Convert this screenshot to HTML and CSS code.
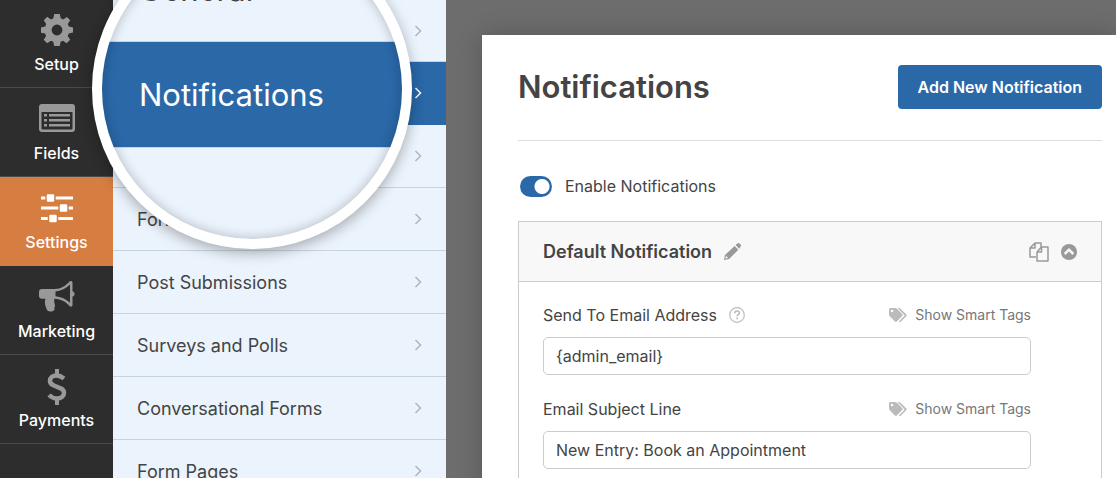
FILE: index.html
```html
<!DOCTYPE html>
<html lang="en">
<head>
    <meta charset="UTF-8">
    <meta name="viewport" content="width=device-width, initial-scale=1.0">
    <title>Form Builder - Notifications</title>
    <link rel="stylesheet" href="styles.css">
</head>
<body>
    <div class="builder">
        <!-- Main toolbar -->
        <nav class="toolbar">
            <a href="#setup" class="tool">
                <svg width="32" height="32" viewBox="0 0 32 32" fill="currentColor" fill-rule="evenodd">
                    <path d="M13.2 0h5.6l.9 4.3 2.5 1.1L25.9 3l3.3 3.3-2.5 3.7 1.1 2.6 4.2.8v5.2l-4.2.9-1.1 2.5 2.500 3.700-3.600 3.600-3.600-2.500-2.400 1-.8 4.200h-5.600l-.9-4.200-2.400-1-3.700 2.500-3.500-3.500 2.400-3.800-1-2.500L0 18.700v-5.200l4.200-.9 1-2.600-2.400-3.700L6.300 2.800l3.600 2.600 2.500-1.100zM16 10.600a5.400 5.400 0 1 0 0 10.800 5.400 5.400 0 0 0 0-10.800z"/>
                </svg>
                <span>Setup</span>
            </a>
            <a href="#fields" class="tool">
                <svg width="36" height="32" viewBox="0 0 36 32" fill="currentColor" fill-rule="evenodd">
                    <path d="M3 2h30a3 3 0 0 1 3 3v22a3 3 0 0 1-3 3H3a3 3 0 0 1-3-3V5a3 3 0 0 1 3-3zM2.500 10v16.500a1 1 0 0 0 1 1h29a1 1 0 0 0 1-1V10z"/>
                    <path d="M5 12h3v2.500H5zM10 12h21v2.500H10zM5 17h3v2.500H5zM10 17h21v2.500H10zM5 22h3v2.500H5zM10 22h21v2.500H10z"/>
                </svg>
                <span>Fields</span>
            </a>
            <a href="#settings" class="tool active">
                <svg width="32" height="32" viewBox="0 0 32 32" fill="currentColor">
                    <path d="M0 5.500h32v3H0zM0 15.500h32v3H0zM0 26h32v3H0z"/>
                    <g stroke="#d67d42" stroke-width="1.500">
                        <rect x="5" y="2.500" width="9" height="9" rx="2"/>
                        <rect x="18" y="12.500" width="9" height="9" rx="2"/>
                        <rect x="7.500" y="23" width="9" height="9" rx="2"/>
                    </g>
                </svg>
                <span>Settings</span>
            </a>
            <a href="#marketing" class="tool">
                <svg width="36" height="32" viewBox="0 0 36 32" fill="currentColor" fill-rule="evenodd">
                    <path d="M3 9h12.500C22 9 27 5.500 30.500 1.500 31.500.5 33.500 1 33.500 2.500v8.700c2.700.6 2.700 4.800 0 5.400V25c0 1.600-1.800 2.200-3 1-3.500-4-8-7-15-7.300-1 3.300.5 5 .5 7 0 1.500-1.200 2-.5 3.300.4.700-.5 1.500-1.500 2-2 1-5 .5-6-1-1.500-3.500-3-7-1.500-11.200H3a3 3 0 0 1-3-3V12a3 3 0 0 1 3-3zM31 4.500c-4 4-9 6.500-14.500 7v4.700c5.500.5 10.500 2.800 14.500 6.600z"/>
                </svg>
                <span>Marketing</span>
            </a>
            <a href="#payments" class="tool">
                <svg width="20" height="36" viewBox="0 0 20 36" fill="none" stroke="currentColor">
                    <path d="M10 0v6M10 30v6" stroke-width="4"/>
                    <path d="M17 9.500C14.500 7.500 12 6.500 9.500 6.500 5.500 6.500 3 8.700 3 11.800c0 7.400 14 4.600 14 12 0 3.700-3 5.700-7 5.700-3.200 0-6-1.500-8-3.500" stroke-width="4.500"/>
                </svg>
                <span>Payments</span>
            </a>
        </nav>

        <!-- Settings sections -->
        <nav class="sections">
            <a href="#general">General<svg class="chevron" viewBox="0 0 8 12"><path d="M1.500 1l5 5-5 5"/></svg></a>
            <a href="#notifications" class="active">Notifications<svg class="chevron" viewBox="0 0 8 12"><path d="M1.500 1l5 5-5 5"/></svg></a>
            <a href="#confirmations">Confirmations<svg class="chevron" viewBox="0 0 8 12"><path d="M1.500 1l5 5-5 5"/></svg></a>
            <a href="#form-locker">Form Locker<svg class="chevron" viewBox="0 0 8 12"><path d="M1.500 1l5 5-5 5"/></svg></a>
            <a href="#post-submissions">Post Submissions<svg class="chevron" viewBox="0 0 8 12"><path d="M1.500 1l5 5-5 5"/></svg></a>
            <a href="#surveys">Surveys and Polls<svg class="chevron" viewBox="0 0 8 12"><path d="M1.500 1l5 5-5 5"/></svg></a>
            <a href="#conversational">Conversational Forms<svg class="chevron" viewBox="0 0 8 12"><path d="M1.500 1l5 5-5 5"/></svg></a>
            <a href="#form-pages">Form Pages<svg class="chevron" viewBox="0 0 8 12"><path d="M1.500 1l5 5-5 5"/></svg></a>
        </nav>

        <!-- Notification settings -->
        <div class="stage">
            <main class="panel">
                <header class="panel-header">
                    <h1>Notifications</h1>
                    <button type="button" class="add-button">Add New Notification</button>
                </header>

                <label class="toggle">
                    <input type="checkbox" role="switch" checked>
                    <span>Enable Notifications</span>
                </label>

                <section class="card">
                    <div class="card-header">
                        <h2>Default Notification</h2>
                        <button type="button" class="icon-button" aria-label="Rename">
                            <svg width="17" height="17" viewBox="0 0 18 18" fill="currentColor" fill-rule="evenodd">
                                <path d="M11.300 3.200l3.900 3.900L5.400 17 0 18l1-5.400zM1.900 13.900l-.5 2.500 2.500-.5v-1H2.900v-1z"/>
                                <path d="M12.300 2.200L14 .6c.8-.8 1.800-.8 2.500 0l1 1c.7.700.7 1.700 0 2.500l-1.400 1.900z"/>
                            </svg>
                        </button>
                        <div class="card-actions">
                            <button type="button" class="icon-button" aria-label="Duplicate">
                                <svg width="20" height="20" viewBox="0 0 20 20" fill="none" stroke="currentColor" stroke-width="1.500" stroke-linejoin="round">
                                    <path d="M7 15H1V6l5-5h6v4M6 1v5H1"/>
                                    <path d="M12.500 5H19v14H8V10zM12.500 5v5H8"/>
                                </svg>
                            </button>
                            <button type="button" class="icon-button" aria-label="Collapse">
                                <svg width="16" height="16" viewBox="0 0 16 16">
                                    <circle cx="8" cy="8" r="8" fill="currentColor"/>
                                    <path d="M3.700 10L8 5.700l4.300 4.300" fill="none" stroke="#f8f8f8" stroke-width="2.500"/>
                                </svg>
                            </button>
                        </div>
                    </div>

                    <div class="card-body">
                        <div class="field">
                            <div class="field-head">
                                <label for="sendTo">Send To Email Address</label>
                                <button type="button" class="icon-button help" aria-label="Help">
                                    <svg width="16" height="16" viewBox="0 0 16 16" fill="none" stroke="currentColor">
                                        <circle cx="8" cy="8" r="7.300" stroke-width="1.200"/>
                                        <path d="M5.700 6.300C5.700 3.200 10.400 3.300 10.400 6c0 1.600-2.300 1.700-2.300 3.300M8.100 10.500v1.700" stroke-width="1.600"/>
                                    </svg>
                                </button>
                                <a href="#tags" class="smart-tags">
                                    <svg width="18" height="15" viewBox="0 0 18 15" fill="currentColor" fill-rule="evenodd">
                                        <path d="M0 1.500C0 .7.700 0 1.500 0H6c.8 0 1.500.3 2 .8L13.200 6c.6.600.6 1.400 0 2l-5.400 5.400c-.6.600-1.400.6-2 0L.8 8.300C.3 7.800 0 7 0 6.200zM3 1.700a1.300 1.300 0 1 0 0 2.600 1.300 1.300 0 0 0 0-2.600z"/>
                                        <path d="M8.500 0h1c.8 0 1.500.3 2 .8L17.200 6.300c.6.600.6 1.400 0 2L12 13.600c-.7.700-1.500.6-2.200-.1L15.300 8c.3-.3.300-.7 0-1z"/>
                                    </svg>
                                    Show Smart Tags
                                </a>
                            </div>
                            <input type="text" id="sendTo" value="{admin_email}">
                        </div>

                        <div class="field">
                            <div class="field-head">
                                <label for="subject">Email Subject Line</label>
                                <a href="#tags" class="smart-tags">
                                    <svg width="18" height="15" viewBox="0 0 18 15" fill="currentColor" fill-rule="evenodd">
                                        <path d="M0 1.500C0 .7.700 0 1.500 0H6c.8 0 1.500.3 2 .8L13.200 6c.6.600.6 1.400 0 2l-5.400 5.400c-.6.600-1.400.6-2 0L.8 8.300C.3 7.800 0 7 0 6.200zM3 1.700a1.300 1.300 0 1 0 0 2.600 1.300 1.300 0 0 0 0-2.600z"/>
                                        <path d="M8.500 0h1c.8 0 1.500.3 2 .8L17.200 6.300c.6.600.6 1.400 0 2L12 13.600c-.7.700-1.500.6-2.200-.1L15.300 8c.3-.3.300-.7 0-1z"/>
                                    </svg>
                                    Show Smart Tags
                                </a>
                            </div>
                            <input type="text" id="subject" value="New Entry: Book an Appointment">
                        </div>
                    </div>
                </section>
            </main>
        </div>

        <!-- Magnifier over the active section -->
        <div class="lens" aria-hidden="true">
            <div class="lens-row lens-top">General</div>
            <div class="lens-row lens-active">Notifications</div>
            <div class="lens-row"></div>
        </div>
    </div>
</body>
</html>
```
FILE: styles.css
```css
* {
    box-sizing: border-box;
}
body {
    margin: 0;
    font-family: Inter, "Liberation Sans", sans-serif;
    color: #444;
    overflow: hidden;
}
a {
    color: inherit;
    text-decoration: none;
}
svg {
    display: block;
    flex: none;
}
.builder {
    position: relative;
    display: flex;
    height: 100vh;
    overflow: hidden;
}

/* Main toolbar */
.toolbar {
    flex: none;
    width: 113px;
    background-color: #2d2d2d;
}
.tool {
    display: flex;
    flex-direction: column;
    align-items: center;
    justify-content: space-between;
    height: 89px;
    padding: 14px 0 13px;
    border-bottom: 1px solid #4a4a4a;
    color: #999;
}
.tool:first-child {
    height: 88px;
}
.tool svg {
    height: 32px;
}
.tool:last-child svg {
    height: 36px;
}
.tool span {
    color: #fff;
    font-size: 16px;
    font-weight: 500;
    line-height: 20px;
}
.tool.active {
    background-color: #d67d42;
    border-bottom-color: #d67d42;
    color: #fff;
}

/* Settings sections */
.sections {
    flex: none;
    width: 333px;
    background-color: #ebf3fc;
}
.sections a {
    display: flex;
    align-items: center;
    justify-content: space-between;
    height: 63px;
    padding: 0 24px;
    border-bottom: 1px solid #c9d3de;
    font-size: 18px;
}
.sections a:first-child {
    height: 62px;
}
.sections .active {
    background-color: #2a68a8;
    border-bottom-color: #2a68a8;
    color: #fff;
}
.chevron {
    width: 8px;
    height: 12px;
    fill: none;
    stroke: #b0b5ba;
    stroke-width: 1.5px;
}
.active .chevron {
    stroke: #fff;
}

/* Notification settings */
.stage {
    flex: 1;
    min-width: 0;
    padding: 35px 0 0 36px;
    background-color: #6d6d6d;
}
.panel {
    min-height: 100%;
    padding: 0 14px 0 36px;
    background-color: #fff;
    box-shadow: 0 0 24px rgba(0, 0, 0, 0.2);
}
.panel-header {
    display: flex;
    align-items: center;
    justify-content: space-between;
    height: 106px;
    padding-bottom: 2px;
    border-bottom: 1px solid #ddd;
}
h1 {
    margin: 0;
    font-size: 31px;
    font-weight: 600;
}
.add-button {
    height: 44px;
    padding: 0 20px;
    border: none;
    border-radius: 4px;
    background-color: #2a68a8;
    color: #fff;
    font: 600 16px Inter, sans-serif;
    cursor: pointer;
}
.toggle {
    display: flex;
    align-items: center;
    gap: 13px;
    padding: 35px 2px 24px;
    font-size: 16px;
    line-height: 21px;
}
.toggle input {
    appearance: none;
    width: 32px;
    height: 21px;
    margin: 0;
    border-radius: 11px;
    background: radial-gradient(circle at 22px 50%, #fff 7px, #2a68a8 8px);
}
.card {
    border: 1px solid #ccc;
}
.card-header {
    display: flex;
    align-items: center;
    gap: 12px;
    height: 60px;
    padding: 0 24px;
    border-bottom: 1px solid #ccc;
    background-color: #f8f8f8;
}
h2 {
    margin: 0;
    font-size: 18px;
    font-weight: 600;
}
.icon-button {
    padding: 0;
    border: none;
    background: none;
    color: #999;
    cursor: pointer;
}
.card-actions {
    display: flex;
    align-items: center;
    gap: 12px;
    margin-left: auto;
}
.card-body {
    display: flex;
    flex-direction: column;
    gap: 24px;
    padding: 23px 70px 24px 24px;
}
.field-head {
    display: flex;
    align-items: center;
    gap: 12px;
    margin-bottom: 12px;
    font-size: 16px;
    line-height: 20px;
}
.help {
    color: #bbb;
}
.smart-tags {
    display: flex;
    align-items: center;
    gap: 8px;
    margin-left: auto;
    color: #777;
    font-size: 14px;
}
.smart-tags svg {
    color: #bbb;
}
.field input {
    display: block;
    width: 100%;
    height: 38px;
    padding: 0 12px;
    border: 1px solid #ccc;
    border-radius: 5px;
    background-color: #fff;
    color: #444;
    font: 16px Inter, sans-serif;
}

/* Magnifier */
.lens {
    position: absolute;
    top: -71px;
    left: 92px;
    width: 320px;
    height: 320px;
    border: 10px solid #fff;
    border-radius: 50%;
    background-color: #ebf3fc;
    box-shadow: 0 4px 14px rgba(0, 0, 0, 0.3);
    overflow: hidden;
}
.lens::after {
    content: "";
    position: absolute;
    inset: 0;
    border-radius: 50%;
    box-shadow: inset 0 0 12px rgba(0, 0, 0, 0.25);
}
.lens-row {
    height: 106px;
    padding-left: 37px;
    border-top: 1px solid #c9d3de;
    font-size: 31px;
    line-height: 106px;
}
.lens-top {
    border-top: none;
    height: 102px;
    line-height: 102px;
}
.lens-active {
    background-color: #2a68a8;
    color: #fff;
}
```
